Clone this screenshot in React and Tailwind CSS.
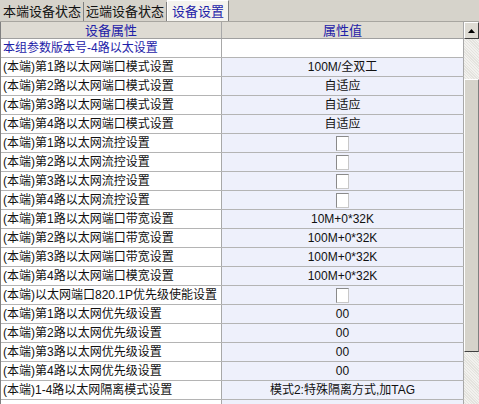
import React from 'react';

const FONT = { fontFamily: '"Liberation Sans", "Noto Sans CJK SC", sans-serif' };

const ROWS = [
  { name: '本组参数版本号-4路以太设置', value: '', title: true },
  { name: '(本端)第1路以太网端口模式设置', value: '100M/全双工' },
  { name: '(本端)第2路以太网端口模式设置', value: '自适应' },
  { name: '(本端)第3路以太网端口模式设置', value: '自适应' },
  { name: '(本端)第4路以太网端口模式设置', value: '自适应' },
  { name: '(本端)第1路以太网流控设置', check: true },
  { name: '(本端)第2路以太网流控设置', check: true },
  { name: '(本端)第3路以太网流控设置', check: true },
  { name: '(本端)第4路以太网流控设置', check: true },
  { name: '(本端)第1路以太网端口带宽设置', value: '10M+0*32K' },
  { name: '(本端)第2路以太网端口带宽设置', value: '100M+0*32K' },
  { name: '(本端)第3路以太网端口带宽设置', value: '100M+0*32K' },
  { name: '(本端)第4路以太网端口模宽设置', value: '100M+0*32K' },
  { name: '(本端)以太网端口820.1P优先级使能设置', check: true },
  { name: '(本端)第1路以太网优先级设置', value: '00' },
  { name: '(本端)第2路以太网优先级设置', value: '00' },
  { name: '(本端)第3路以太网优先级设置', value: '00' },
  { name: '(本端)第4路以太网优先级设置', value: '00' },
  { name: '(本端)1-4路以太网隔离模式设置', value: '模式2:特殊隔离方式,加TAG' },
  { name: '', value: '' },
];

const TABS = ['本端设备状态', '远端设备状态', '设备设置'];

function Tab({ label, active }) {
  return (
    <div
      className={
        active
          ? 'h-[21px] px-[4px] flex items-center bg-[#f4f3ee] border-t border-l border-r border-t-white border-l-white border-r-[#808080] text-[#1e22a8] text-[13px]'
          : 'h-[19px] mt-[2px] px-[2px] flex items-center border-r border-r-[#808080] text-[#111] text-[13px]'
      }
    >
      {label}
    </div>
  );
}

function CheckBox() {
  return (
    <div className="w-[13px] h-[15px] bg-white border border-[#8a8a8a] border-r-[#c8c8c8] border-b-[#c8c8c8]" />
  );
}

export default function App() {
  return (
    <div className="w-[479px] h-[404px] overflow-hidden bg-[#d6d3cb] leading-none" style={FONT}>
      <div className="flex h-[21px] pl-[1px] items-start">
        {TABS.map((t, i) => (
          <Tab key={t} label={t} active={i === 2} />
        ))}
      </div>
      <div className="flex h-[383px] border-t border-[#a8a6a0]">
        <div className="w-[464px] border-l border-[#808080] overflow-hidden">
          <div className="grid grid-cols-[221px_242px] h-[17px] bg-[#dedbd3] border-b border-[#a0a0a0] text-[13px] text-[#1e22a8]">
            <div className="flex items-center justify-center border-r border-[#a8a8a8]">设备属性</div>
            <div className="flex items-center justify-center border-r border-[#a8a8a8]">属性值</div>
          </div>
          {ROWS.map((r, i) => (
            <div key={i} className="grid grid-cols-[221px_242px] h-[19px] border-b border-[#b4b4b4] text-[12px]">
              <div
                className={
                  'flex items-center pl-[2px] bg-white border-r border-[#a8a8a8] whitespace-nowrap ' +
                  (r.title ? 'text-[#1e22a8]' : 'text-[#111]')
                }
              >
                {r.name}
              </div>
              <div
                className={
                  'flex items-center justify-center border-r border-[#a8a8a8] text-[#111] ' +
                  (r.title ? 'bg-white' : 'bg-[#eef0fb]')
                }
              >
                {r.check ? <CheckBox /> : r.value}
              </div>
            </div>
          ))}
        </div>
        <div className="w-[15px] flex flex-col bg-[#ecebe6]">
          <div className="h-[17px] flex items-center justify-center bg-[#dedbd3] border-t border-l border-t-white border-l-white border-r border-b border-r-[#404040] border-b-[#404040]">
            <svg width="7" height="4" viewBox="0 0 7 4">
              <path d="M3.5 0 L7 4 L0 4 Z" fill="#000" />
            </svg>
          </div>
          <div className="h-[40px] bg-[repeating-linear-gradient(45deg,#f2f1ee_0px,#f2f1ee_1px,#e4e3de_1px,#e4e3de_2px)]" />
          <div className="h-[273px] bg-[#d6d3cb] border-t border-l border-t-white border-l-white border-r border-b border-r-[#808080] border-b-[#404040]" />
          <div className="flex-1 bg-[repeating-linear-gradient(45deg,#f2f1ee_0px,#f2f1ee_1px,#e4e3de_1px,#e4e3de_2px)]" />
        </div>
      </div>
    </div>
  );
}
